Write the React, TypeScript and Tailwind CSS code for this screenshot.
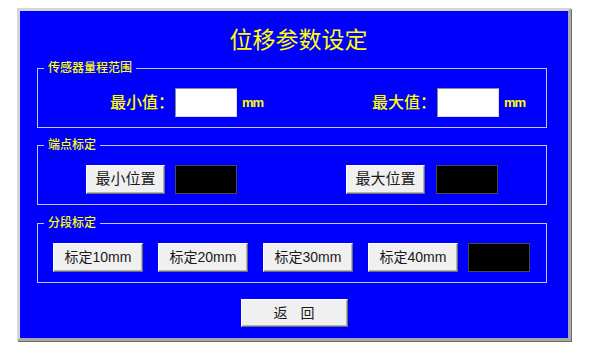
const cjk = { fontFamily: '"Liberation Sans", "Noto Sans CJK SC", sans-serif' };

function Btn({ label, w, h = 29, size = 14 }: { label: string; w: number; h?: number; size?: number }) {
  return (
    <button
      className="flex items-center justify-center bg-[#f0f0f0] text-[#1a1a1a] border border-t-[#fdfdfd] border-l-[#fdfdfd] border-r-[#6e6e6e] border-b-[#6e6e6e] shadow-[inset_-1px_-1px_0_#b4b4b4]"
      style={{ width: w, height: h, fontSize: size }}
    >
      {label}
    </button>
  );
}

function BlackBox() {
  return <div className="w-[62px] h-[29px] bg-black border border-[#4a4a4a]" />;
}

function Group({ title, children }: { title: string; children: React.ReactNode }) {
  return (
    <div className="relative ml-[17px] w-[510px] h-[60px] border border-[#c4c4ec]">
      <span className="absolute left-[6px] -top-[8px] px-[4px] bg-[#0000ff] text-[#ffff00] text-[12px] leading-[14px] font-medium">
        {title}
      </span>
      {children}
    </div>
  );
}

function ValueField({ label }: { label: string }) {
  return (
    <div className="flex items-center">
      <span className="w-[64px] text-[16px] leading-[29px] text-[#ffff00] font-medium">{label}</span>
      <div className="ml-[1px] w-[62px] h-[29px] bg-white border border-t-[#8c8c8c] border-l-[#8c8c8c] border-r-[#dcdcdc] border-b-[#dcdcdc]" />
      <span className="ml-[5px] text-[13px] font-bold text-[#ffff00] tracking-[-1px]">mm</span>
    </div>
  );
}

export default function App() {
  return (
    <div className="w-[595px] h-[353px] bg-white pt-[8px] pl-[17px]" style={cjk}>
      <div className="w-[554px] h-[333px] bg-[#0000ff] border-[3px] border-t-[#d6d6d6] border-l-[#d6d6d6] border-r-[#a8a8a8] border-b-[#a8a8a8] shadow-[1px_1px_0_#6e6e6e] flex flex-col">
        <div className="pt-[15px] pl-[9px] h-[43px] text-center text-[23px] leading-[28px] text-[#ffff00]">
          位移参数设定
        </div>

        <div className="mt-[14px]">
          <Group title="传感器量程范围">
            <div className="flex pt-[19px] pl-[72px]">
              <div className="w-[262px]">
                <ValueField label="最小值：" />
              </div>
              <ValueField label="最大值：" />
            </div>
          </Group>
        </div>

        <div className="mt-[17px]">
          <Group title="端点标定">
            <div className="flex pt-[19px] pl-[48px]">
              <div className="w-[260px] flex gap-[10px]">
                <Btn label="最小位置" w={79} size={15} />
                <BlackBox />
              </div>
              <div className="flex gap-[11px]">
                <Btn label="最大位置" w={79} size={15} />
                <BlackBox />
              </div>
            </div>
          </Group>
        </div>

        <div className="mt-[18px]">
          <Group title="分段标定">
            <div className="flex pt-[19px] pl-[15px] gap-[15px]">
              <Btn label="标定10mm" w={90} />
              <Btn label="标定20mm" w={90} />
              <Btn label="标定30mm" w={90} />
              <div className="flex gap-[10px]">
                <Btn label="标定40mm" w={90} />
                <BlackBox />
              </div>
            </div>
          </Group>
        </div>

        <div className="mt-[16px] flex justify-center">
          <button className="w-[107px] h-[28px] flex items-center justify-center gap-[13px] bg-[#f0f0f0] text-[#1a1a1a] text-[14px] border border-t-[#fdfdfd] border-l-[#fdfdfd] border-r-[#6e6e6e] border-b-[#6e6e6e] shadow-[inset_-1px_-1px_0_#b4b4b4]">
            <span>返</span>
            <span>回</span>
          </button>
        </div>
      </div>
    </div>
  );
}
